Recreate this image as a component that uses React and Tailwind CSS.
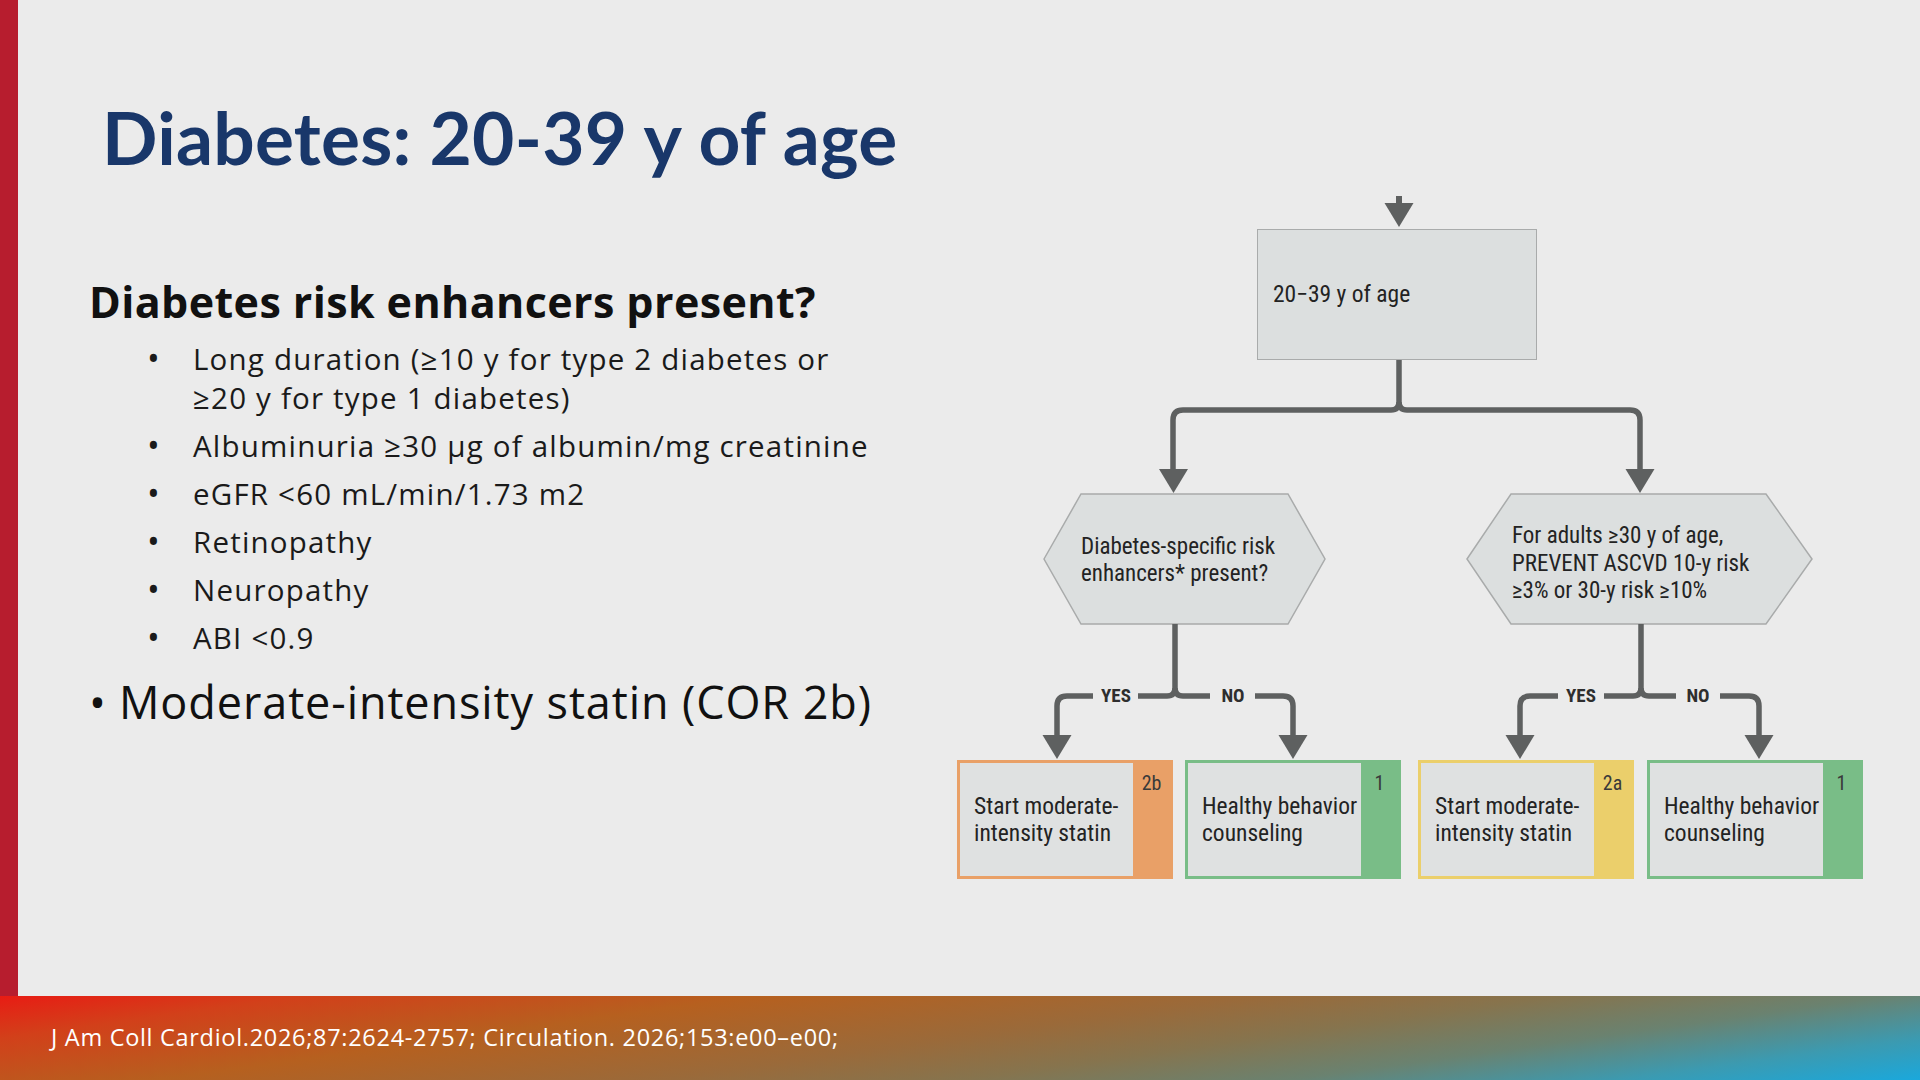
const LINE = "#5e6060";

function Head({ x, y }) {
  return <polygon points={`${x - 14.5},${y} ${x + 14.5},${y} ${x},${y + 24}`} fill={LINE} />;
}

function Outcome({ left, text, grade, frame, strip }) {
  return (
    <div className={`absolute top-[565px] w-[216px] h-[119px] flex border-[3px] ${frame}`} style={{ left }}>
      <div className="flex-1 bg-[#dfe1e1] flex items-center pl-[14px] text-[23.5px] leading-[27px] text-[#232323]">
        <span>{text[0]}<br />{text[1]}</span>
      </div>
      <div className={`w-[37px] flex justify-center pt-[10px] text-[20px] leading-none text-[#3a3a3a] ${strip}`}>{grade}</div>
    </div>
  );
}

function Label({ x, children }) {
  return (
    <span className="absolute top-[490px] w-[50px] -ml-[25px] text-center text-[19px] leading-[22px] font-bold text-[#2e2e2e]" style={{ left: x }}>
      {children}
    </span>
  );
}

function Flowchart() {
  return (
    <div className="relative w-[906px] h-[690px] mt-[195px] font-['Liberation_Sans_Narrow','Roboto_Condensed','DejaVu_Sans_Condensed',Roboto,sans-serif]">
      <svg className="absolute inset-0" width="906" height="690" viewBox="0 0 906 690" fill="none">
        {/* entry arrow */}
        <path d="M442 1 V 10" stroke={LINE} strokeWidth="6" />
        <Head x={442} y={8} />

        {/* split under first box */}
        <path d="M442 165 V 207 Q442 215 434 215 H 226 Q216 215 216 225 V 276" stroke={LINE} strokeWidth="5.5" />
        <path d="M442 207 Q442 215 450 215 H 673 Q683 215 683 225 V 276" stroke={LINE} strokeWidth="5.5" />
        <Head x={216.5} y={274} />
        <Head x={683} y={274} />

        {/* decision shapes */}
        <polygon points="87,364 124,299 331,299 368,364 331,429 124,429" fill="#dcdfdf" stroke="#a9abab" strokeWidth="1.5" />
        <polygon points="510,364 554,299 809,299 855,364 809,429 554,429" fill="#dcdfdf" stroke="#a9abab" strokeWidth="1.5" />

        {/* left decision branches */}
        <path d="M218 429 V 493 Q218 501 210 501 H 181" stroke={LINE} strokeWidth="5.5" />
        <path d="M136 501 H 110 Q100 501 100 511 V 542" stroke={LINE} strokeWidth="5.5" />
        <path d="M218 493 Q218 501 226 501 H 253" stroke={LINE} strokeWidth="5.5" />
        <path d="M298 501 H 326 Q336 501 336 511 V 542" stroke={LINE} strokeWidth="5.5" />
        <Head x={100} y={540} />
        <Head x={336} y={540} />

        {/* right decision branches */}
        <path d="M684 429 V 493 Q684 501 676 501 H 647" stroke={LINE} strokeWidth="5.5" />
        <path d="M601 501 H 573 Q563 501 563 511 V 542" stroke={LINE} strokeWidth="5.5" />
        <path d="M684 493 Q684 501 692 501 H 719" stroke={LINE} strokeWidth="5.5" />
        <path d="M763 501 H 792 Q802 501 802 511 V 542" stroke={LINE} strokeWidth="5.5" />
        <Head x={563} y={540} />
        <Head x={802} y={540} />
      </svg>

      <div className="absolute left-[300px] top-[34px] w-[280px] h-[131px] bg-[#dcdfdf] border-[1.5px] border-[#a9abab] flex items-center pl-[15px] text-[23.5px] text-[#232323]">
        20−39 y of age
      </div>

      <div className="absolute left-[124px] top-[338px] text-[23px] leading-[27px] text-[#232323]">
        Diabetes-specific risk<br />enhancers* present?
      </div>
      <div className="absolute left-[555px] top-[327px] text-[23px] leading-[27.5px] text-[#232323]">
        For adults ≥30 y of age,<br />PREVENT ASCVD 10-y risk<br />≥3% or 30-y risk ≥10%
      </div>

      <Label x={159}>YES</Label>
      <Label x={276}>NO</Label>
      <Label x={624}>YES</Label>
      <Label x={741}>NO</Label>

      <Outcome left={0} text={["Start moderate-", "intensity statin"]} grade="2b" frame="border-[#e9a067]" strip="bg-[#e9a067]" />
      <Outcome left={228} text={["Healthy behavior", "counseling"]} grade="1" frame="border-[#79bd87]" strip="bg-[#79bd87]" />
      <Outcome left={461} text={["Start moderate-", "intensity statin"]} grade="2a" frame="border-[#ebcf6b]" strip="bg-[#ebcf6b]" />
      <Outcome left={690} text={["Healthy behavior", "counseling"]} grade="1" frame="border-[#79bd87]" strip="bg-[#79bd87]" />
    </div>
  );
}

const enhancers = [
  ["Long duration (≥10 y for type 2 diabetes or", "≥20 y for type 1 diabetes)"],
  ["Albuminuria ≥30 µg of albumin/mg creatinine"],
  ["eGFR <60 mL/min/1.73 m2"],
  ["Retinopathy"],
  ["Neuropathy"],
  ["ABI <0.9"],
];

export default function App() {
  return (
    <div className="w-[1920px] h-[1080px] bg-[#ebebeb] flex flex-col overflow-hidden font-['Open_Sans',sans-serif]">
      <div className="flex flex-1 min-h-0">
        <div className="w-[18px] bg-[#b71d2e]" />
        <div className="w-[939px] pl-[71px] pt-[101px] flex flex-col">
          <h1 className="ml-[13px] font-['Lato',sans-serif] text-[73px] leading-none font-bold tracking-[0.25px] text-[#19376a]">Diabetes: 20-39 y of age</h1>
          <h2 className="mt-[106px] text-[43px] leading-none font-bold tracking-[0.4px] text-[#111]">Diabetes risk enhancers present?</h2>
          <ul className="mt-[16px] flex flex-col gap-[9px] text-[29.5px] leading-[39px] tracking-[1.2px] text-[#1a1a1a]">
            {enhancers.map((lines) => (
              <li key={lines[0]} className="flex">
                <span className="ml-[58px] w-[46px] shrink-0 text-[34px]">•</span>
                <span>
                  {lines[0]}
                  {lines[1] && <br />}
                  {lines[1]}
                </span>
              </li>
            ))}
          </ul>
          <p className="mt-[22px] flex text-[45px] leading-none tracking-[0.9px] text-[#111]">
            <span className="w-[30px] shrink-0">•</span>
            <span>Moderate-intensity statin (COR 2b)</span>
          </p>
        </div>
        <Flowchart />
      </div>
      <footer className="h-[84px] shrink-0 flex items-center pl-[51px] text-[23.5px] tracking-[0.7px] text-white bg-[linear-gradient(172deg,#e81c14_0%,#d2401a_12%,#b6601f_30%,#9a6a3a_50%,#86744e_62%,#6a8270_75%,#3c9ab0_88%,#1aa8dc_100%)]">
        J Am Coll Cardiol.2026;87:2624-2757; Circulation. 2026;153:e00–e00;
      </footer>
    </div>
  );
}
